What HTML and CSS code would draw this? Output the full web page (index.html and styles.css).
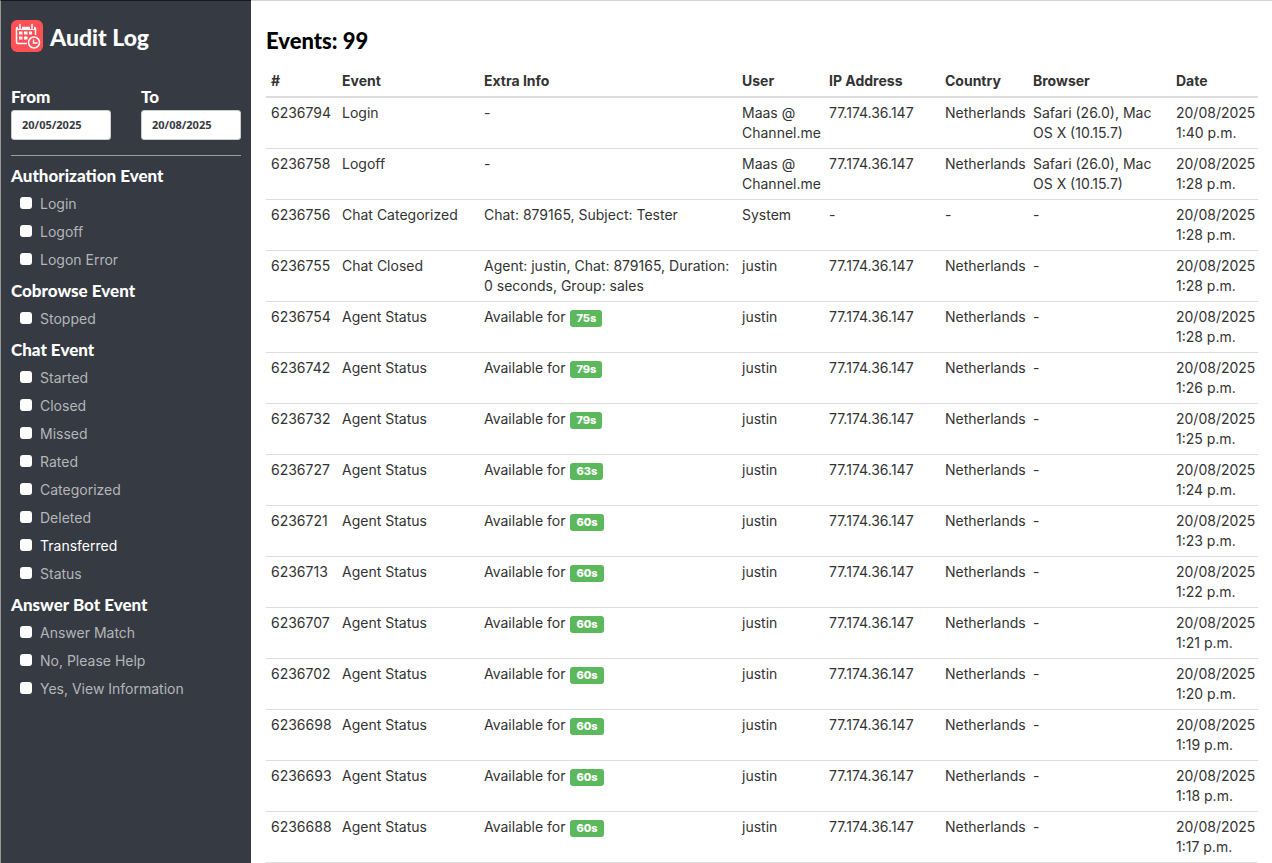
FILE: index.html
```html
<!DOCTYPE html>
<html lang="en">
<head>
  <meta charset="utf-8">
  <title>Audit Log</title>
  <link rel="stylesheet" href="styles.css">
</head>
<body>
<aside class="sidebar">
  <div class="brand">
    <svg class="logo" viewBox="0 0 32 32" fill="none" stroke="#fff" stroke-width="1.5">
      <rect width="32" height="32" rx="6" fill="#ff5055" stroke="none"/>
      <path d="M16 23.500H7Q5.500 23.500 5.500 22V8.500Q5.500 7.500 6.500 7.500H23.500Q24.500 7.500 24.500 8.500V15"/>
      <path d="M5.500 9h19" stroke-width="2"/>
      <path d="M9 4v5M21 4v5" stroke="#ff5055" stroke-width="4"/>
      <path d="M9 4.500v4M21 4.500v4" stroke-linecap="round"/>
      <path d="M8 11.500h3.500v3H8zM13 11.500h3.500v3H13zM18 11.500h3v3h-3zM8 16.500h3.500v3H8zM13 16.500h3.500v3H13z" fill="#fff" stroke="none"/>
      <circle cx="23" cy="22.500" r="7" fill="#ff5055" stroke="none"/>
      <circle cx="23" cy="22.500" r="5.500"/>
      <path d="M22.500 19.500v3.500h4"/>
    </svg>
    <h1>Audit Log</h1>
  </div>
  <form>
    <div class="dates">
      <div class="date">
        <label for="from">From</label>
        <input type="text" id="from" value="20/05/2025">
      </div>
      <div class="date">
        <label for="to">To</label>
        <input type="text" id="to" value="20/08/2025">
      </div>
    </div>
    <h4>Authorization Event</h4>
    <label class="check"><input type="checkbox"> Login</label>
    <label class="check"><input type="checkbox"> Logoff</label>
    <label class="check"><input type="checkbox"> Logon Error</label>
    <h4>Cobrowse Event</h4>
    <label class="check"><input type="checkbox"> Stopped</label>
    <h4>Chat Event</h4>
    <label class="check"><input type="checkbox"> Started</label>
    <label class="check"><input type="checkbox"> Closed</label>
    <label class="check"><input type="checkbox"> Missed</label>
    <label class="check"><input type="checkbox"> Rated</label>
    <label class="check"><input type="checkbox"> Categorized</label>
    <label class="check"><input type="checkbox"> Deleted</label>
    <label class="check active"><input type="checkbox"> Transferred</label>
    <label class="check"><input type="checkbox"> Status</label>
    <h4>Answer Bot Event</h4>
    <label class="check"><input type="checkbox"> Answer Match</label>
    <label class="check"><input type="checkbox"> No, Please Help</label>
    <label class="check"><input type="checkbox"> Yes, View Information</label>
  </form>
</aside>

<main>
  <h2>Events: 99</h2>
  <table>
    <colgroup>
      <col class="id"><col class="event"><col><col class="user">
      <col class="ip"><col class="country"><col class="browser"><col class="when">
    </colgroup>
    <thead>
      <tr><th>#</th><th>Event</th><th>Extra Info</th><th>User</th><th>IP Address</th><th>Country</th><th>Browser</th><th>Date</th></tr>
    </thead>
    <tbody>
      <tr><td>6236794</td><td>Login</td><td>-</td><td>Maas @ Channel.me</td><td>77.174.36.147</td><td>Netherlands</td><td>Safari (26.0), Mac OS X (10.15.7)</td><td>20/08/2025<br>1:40 p.m.</td></tr>
      <tr><td>6236758</td><td>Logoff</td><td>-</td><td>Maas @ Channel.me</td><td>77.174.36.147</td><td>Netherlands</td><td>Safari (26.0), Mac OS X (10.15.7)</td><td>20/08/2025<br>1:28 p.m.</td></tr>
      <tr><td>6236756</td><td>Chat Categorized</td><td>Chat: 879165, Subject: Tester</td><td>System</td><td>-</td><td>-</td><td>-</td><td>20/08/2025<br>1:28 p.m.</td></tr>
      <tr><td>6236755</td><td>Chat Closed</td><td>Agent: justin, Chat: 879165, Duration: 0 seconds, Group: sales</td><td>justin</td><td>77.174.36.147</td><td>Netherlands</td><td>-</td><td>20/08/2025<br>1:28 p.m.</td></tr>
      <tr><td>6236754</td><td>Agent Status</td><td>Available for <span class="badge">75s</span></td><td>justin</td><td>77.174.36.147</td><td>Netherlands</td><td>-</td><td>20/08/2025<br>1:28 p.m.</td></tr>
      <tr><td>6236742</td><td>Agent Status</td><td>Available for <span class="badge">79s</span></td><td>justin</td><td>77.174.36.147</td><td>Netherlands</td><td>-</td><td>20/08/2025<br>1:26 p.m.</td></tr>
      <tr><td>6236732</td><td>Agent Status</td><td>Available for <span class="badge">79s</span></td><td>justin</td><td>77.174.36.147</td><td>Netherlands</td><td>-</td><td>20/08/2025<br>1:25 p.m.</td></tr>
      <tr><td>6236727</td><td>Agent Status</td><td>Available for <span class="badge">63s</span></td><td>justin</td><td>77.174.36.147</td><td>Netherlands</td><td>-</td><td>20/08/2025<br>1:24 p.m.</td></tr>
      <tr><td>6236721</td><td>Agent Status</td><td>Available for <span class="badge">60s</span></td><td>justin</td><td>77.174.36.147</td><td>Netherlands</td><td>-</td><td>20/08/2025<br>1:23 p.m.</td></tr>
      <tr><td>6236713</td><td>Agent Status</td><td>Available for <span class="badge">60s</span></td><td>justin</td><td>77.174.36.147</td><td>Netherlands</td><td>-</td><td>20/08/2025<br>1:22 p.m.</td></tr>
      <tr><td>6236707</td><td>Agent Status</td><td>Available for <span class="badge">60s</span></td><td>justin</td><td>77.174.36.147</td><td>Netherlands</td><td>-</td><td>20/08/2025<br>1:21 p.m.</td></tr>
      <tr><td>6236702</td><td>Agent Status</td><td>Available for <span class="badge">60s</span></td><td>justin</td><td>77.174.36.147</td><td>Netherlands</td><td>-</td><td>20/08/2025<br>1:20 p.m.</td></tr>
      <tr><td>6236698</td><td>Agent Status</td><td>Available for <span class="badge">60s</span></td><td>justin</td><td>77.174.36.147</td><td>Netherlands</td><td>-</td><td>20/08/2025<br>1:19 p.m.</td></tr>
      <tr><td>6236693</td><td>Agent Status</td><td>Available for <span class="badge">60s</span></td><td>justin</td><td>77.174.36.147</td><td>Netherlands</td><td>-</td><td>20/08/2025<br>1:18 p.m.</td></tr>
      <tr><td>6236688</td><td>Agent Status</td><td>Available for <span class="badge">60s</span></td><td>justin</td><td>77.174.36.147</td><td>Netherlands</td><td>-</td><td>20/08/2025<br>1:17 p.m.</td></tr>
    </tbody>
  </table>
</main>
</body>
</html>
```
FILE: styles.css
```css
* {
  box-sizing: border-box;
}
body {
  display: flex;
  min-height: 100vh;
  margin: 0;
  font: 14px/20px Inter, sans-serif;
  color: #333;
  background: #fff;
}
h1, h2, h4 {
  margin: 0;
  font-family: Lato, sans-serif;
  font-weight: 900;
}
.sidebar {
  flex: 0 0 251px;
  padding: 19px 10px;
  border-top: 1px solid #141820;
  border-left: 1px solid #999;
  background: #363a42;
  color: #fff;
}
.brand {
  display: flex;
  gap: 7px;
  height: 67px;
}
.logo {
  width: 32px;
  height: 32px;
}
.brand h1 {
  font-size: 23px;
  line-height: 34px;
}
.dates {
  display: flex;
  gap: 30px;
  padding-bottom: 15px;
  margin-bottom: 3px;
  border-bottom: 1px solid #9b9da1;
}
.date {
  flex: 1;
  min-width: 0;
}
.date label {
  display: block;
  height: 23px;
  font: 900 17px/20px Lato, sans-serif;
}
.date input {
  display: block;
  width: 100%;
  height: 30px;
  padding: 0 10px 2px;
  border: 1px solid #ccc;
  border-radius: 3px;
  font: 700 11px "Noto Sans", "Open Sans", sans-serif;
  color: #363a42;
}
h4 {
  padding: 7px 0 4px;
  font-size: 17px;
  line-height: 20px;
}
.check {
  display: flex;
  align-items: center;
  gap: 8px;
  height: 28px;
  padding-left: 9px;
  color: #b4b6b9;
}
.check.active {
  color: #fff;
}
.check input {
  appearance: none;
  width: 12px;
  height: 12px;
  margin: 0 0 2px;
  border-radius: 3px;
  background: #fff;
}
.check input:checked {
  background: #5cb85c;
}
main {
  flex: 1;
  min-width: 0;
  padding: 25px 14px 0 15px;
  border-top: 1px solid #d5d5d5;
}
h2 {
  height: 40px;
  font-size: 22px;
  line-height: 30px;
  color: #000;
}
table {
  width: 100%;
  table-layout: fixed;
  border-spacing: 0;
}
th, td {
  padding: 5px;
  border-bottom: 1px solid #ddd;
  text-align: left;
  vertical-align: top;
}
th {
  border-bottom-width: 2px;
  font-weight: 700;
}
.id {
  width: 71px;
}
.event {
  width: 142px;
}
.user, .when {
  width: 87px;
}
.ip {
  width: 116px;
}
.country {
  width: 88px;
}
.browser {
  width: 143px;
}
.badge {
  display: inline-block;
  margin-left: 1px;
  padding: 0 6px;
  border-radius: 3px;
  background: #5cb85c;
  color: #fff;
  font-size: 11px;
  line-height: 17px;
  font-weight: 800;
}
```
